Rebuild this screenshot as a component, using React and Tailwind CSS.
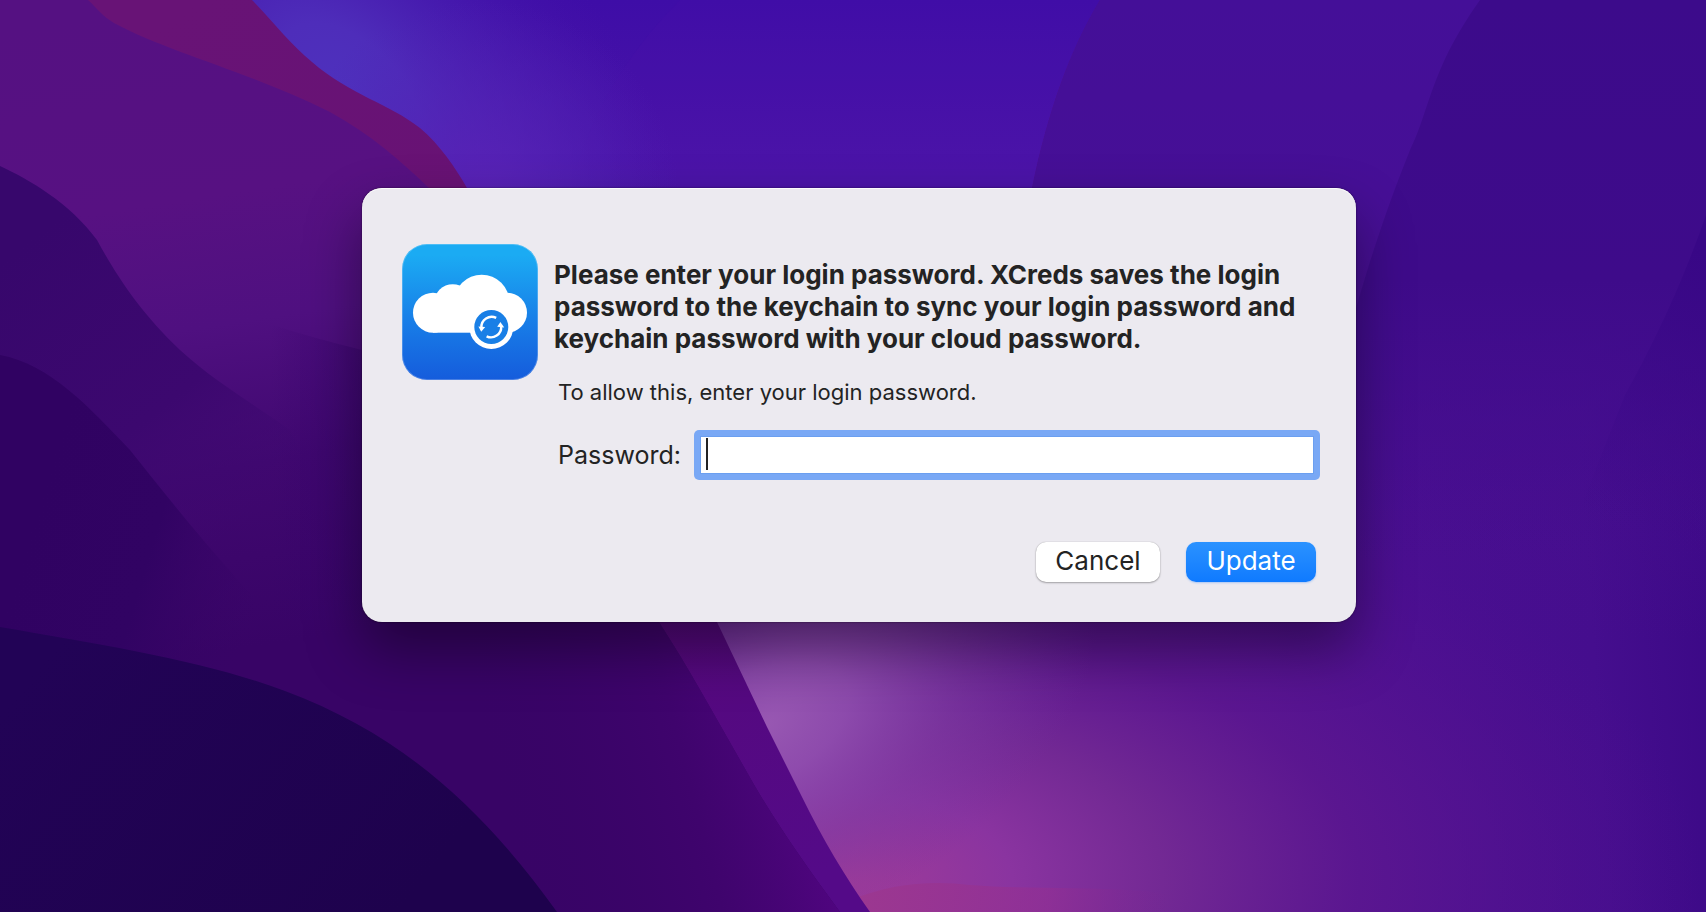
import React from "react";

function Wallpaper() {
  return (
    <svg
      aria-hidden="true"
      className="absolute inset-0 h-full w-full"
      viewBox="0 0 1706 912"
      preserveAspectRatio="none"
    >
      <defs>
        <linearGradient id="sky" gradientUnits="userSpaceOnUse" x1="800" y1="0" x2="800" y2="912">
          <stop offset="0" stopColor="#3e0da7" />
          <stop offset="0.2" stopColor="#4b15a8" />
          <stop offset="0.6" stopColor="#561590" />
          <stop offset="1" stopColor="#5a1490" />
        </linearGradient>
        <radialGradient id="blueGlow" gradientUnits="userSpaceOnUse" cx="0" cy="0" r="1" gradientTransform="translate(350 90) rotate(43) scale(420 240)">
          <stop offset="0" stopColor="#4e31bd" />
          <stop offset="0.2" stopColor="#4e2dba" />
          <stop offset="1" stopColor="#4713a8" stopOpacity="0" />
        </radialGradient>
        <radialGradient id="violetGlow" gradientUnits="userSpaceOnUse" cx="480" cy="200" r="200">
          <stop offset="0" stopColor="#5a22b6" />
          <stop offset="1" stopColor="#5020b4" stopOpacity="0" />
        </radialGradient>
        <linearGradient id="rightBand" gradientUnits="userSpaceOnUse" x1="1100" y1="560" x2="1706" y2="520">
          <stop offset="0" stopColor="#520f90" />
          <stop offset="0.5" stopColor="#4a0f91" />
          <stop offset="0.8" stopColor="#450e8e" />
          <stop offset="1" stopColor="#3c0987" />
        </linearGradient>
        <linearGradient id="rightTop" gradientUnits="userSpaceOnUse" x1="1200" y1="0" x2="1200" y2="640">
          <stop offset="0" stopColor="#440f98" />
          <stop offset="0.3" stopColor="#460f96" />
          <stop offset="1" stopColor="#4a0f90" stopOpacity="0" />
        </linearGradient>
        <linearGradient id="farRight" gradientUnits="userSpaceOnUse" x1="1500" y1="0" x2="1500" y2="560">
          <stop offset="0" stopColor="#3c0b8b" />
          <stop offset="0.5" stopColor="#3e0b8a" />
          <stop offset="1" stopColor="#430d8c" stopOpacity="0" />
        </linearGradient>
        <linearGradient id="edgeRight" gradientUnits="userSpaceOnUse" x1="1706" y1="250" x2="1600" y2="520">
          <stop offset="0" stopColor="#380786" />
          <stop offset="1" stopColor="#3d0a88" stopOpacity="0" />
        </linearGradient>
        <radialGradient id="pink" gradientUnits="userSpaceOnUse" cx="0" cy="0" r="1" gradientTransform="translate(840 880) scale(860 440)">
          <stop offset="0" stopColor="#a03c98" />
          <stop offset="0.2" stopColor="#8a34a0" />
          <stop offset="0.38" stopColor="#742a94" stopOpacity="0.95" />
          <stop offset="0.6" stopColor="#5e1890" stopOpacity="0.8" />
          <stop offset="1" stopColor="#520f90" stopOpacity="0" />
        </radialGradient>
        <radialGradient id="lilac" gradientUnits="userSpaceOnUse" cx="0" cy="0" r="1" gradientTransform="translate(765 725) rotate(62) scale(210 360)">
          <stop offset="0" stopColor="#9858b2" />
          <stop offset="0.25" stopColor="#9150b0" stopOpacity="0.85" />
          <stop offset="0.6" stopColor="#7e3ca4" stopOpacity="0.5" />
          <stop offset="1" stopColor="#7030a0" stopOpacity="0" />
        </radialGradient>
        <linearGradient id="magenta" gradientUnits="userSpaceOnUse" x1="850" y1="0" x2="1250" y2="0">
          <stop offset="0" stopColor="#9c3890" />
          <stop offset="0.5" stopColor="#932f92" stopOpacity="0.6" />
          <stop offset="0.8" stopColor="#7c2490" stopOpacity="0" />
        </linearGradient>
        <linearGradient id="wine" gradientUnits="userSpaceOnUse" x1="200" y1="0" x2="760" y2="912">
          <stop offset="0" stopColor="#681376" />
          <stop offset="0.3" stopColor="#681274" />
          <stop offset="0.65" stopColor="#55087a" />
          <stop offset="1" stopColor="#540a88" />
        </linearGradient>
        <linearGradient id="plum" gradientUnits="userSpaceOnUse" x1="200" y1="0" x2="300" y2="640">
          <stop offset="0" stopColor="#551182" />
          <stop offset="0.3" stopColor="#571182" />
          <stop offset="0.5" stopColor="#4f1080" />
          <stop offset="0.72" stopColor="#400870" />
          <stop offset="1" stopColor="#380466" />
        </linearGradient>
        <linearGradient id="plumLow" gradientUnits="userSpaceOnUse" x1="480" y1="740" x2="790" y2="660">
          <stop offset="0" stopColor="#380468" stopOpacity="0" />
          <stop offset="0.6" stopColor="#420470" stopOpacity="0.7" />
          <stop offset="1" stopColor="#520582" />
        </linearGradient>
        <linearGradient id="indigo" gradientUnits="userSpaceOnUse" x1="80" y1="200" x2="300" y2="480">
          <stop offset="0" stopColor="#37076c" />
          <stop offset="0.6" stopColor="#3c086f" />
          <stop offset="1" stopColor="#3e0870" stopOpacity="0" />
        </linearGradient>
        <linearGradient id="deep" gradientUnits="userSpaceOnUse" x1="40" y1="500" x2="270" y2="570">
          <stop offset="0" stopColor="#300262" />
          <stop offset="0.5" stopColor="#310363" />
          <stop offset="1" stopColor="#370466" stopOpacity="0" />
        </linearGradient>
        <linearGradient id="night" gradientUnits="userSpaceOnUse" x1="60" y1="640" x2="400" y2="912">
          <stop offset="0" stopColor="#220356" />
          <stop offset="1" stopColor="#1e024d" />
        </linearGradient>
        <linearGradient id="fold" gradientUnits="userSpaceOnUse" x1="270" y1="0" x2="362" y2="0">
          <stop offset="0" stopColor="#36046a" stopOpacity="0" />
          <stop offset="1" stopColor="#36046a" stopOpacity="0.5" />
        </linearGradient>
      </defs>
      <rect width="1706" height="912" fill="url(#sky)" />
      <path d="M1100 0C1070 50 1048 110 1032 188L1020 420V912H1706V0Z" fill="url(#rightBand)" />
      <path d="M1100 0C1070 50 1048 110 1032 188L1020 640H1706V0Z" fill="url(#rightTop)" />
      <path d="M1480 0C1430 70 1430 110 1410 150C1392 195 1380 230 1368 268L1280 560H1706V0Z" fill="url(#farRight)" />
      <path d="M1706 215C1680 290 1650 350 1625 395L1560 560H1706Z" fill="url(#edgeRight)" />
      <path d="M680 0C620 60 590 120 570 188H1032C1048 110 1070 50 1100 0Z" fill="#5014ac" opacity="0.12" />
      <rect width="860" height="500" fill="url(#blueGlow)" />
      <rect width="700" height="400" fill="url(#violetGlow)" />
      <rect x="600" y="420" width="1106" height="492" fill="url(#pink)" />
      <rect x="600" y="400" width="600" height="512" fill="url(#lilac)" />
      <path d="M850 900C890 884 930 880 970 885C1060 892 1160 880 1250 912H850Z" fill="url(#magenta)" />
      <path
        d="M0 0H252C275 24 291 45 312 62C350 95 390 104 420 128C440 145 455 167 467 188L560 330L717 622L767 727L802 797C822 838 846 878 870 912H0Z"
        fill="url(#wine)"
      />
      <path
        d="M0 0H88C98 9 102 16 114 23C170 53 250 72 330 112C370 134 400 160 429 188L540 400L659 622C690 670 716 718 744 767C772 818 806 866 840 912H0Z"
        fill="url(#plum)"
      />
      <path
        d="M450 560L626 560L659 622C690 670 716 718 744 767C772 818 806 866 840 912H450Z"
        fill="url(#plumLow)"
      />
      <path d="M270 324C300 334 330 342 362 350V620H270Z" fill="url(#fold)" />
      <path
        d="M0 166C30 180 70 203 97 240C116 275 140 312 180 350C215 382 255 405 290 430L400 640H0Z"
        fill="url(#indigo)"
      />
      <path
        d="M0 355C50 364 90 408 130 450C170 500 205 545 260 604L360 730H0Z"
        fill="url(#deep)"
      />
      <path
        d="M0 627C110 646 205 661 285 691C400 734 480 805 557 912H0Z"
        fill="url(#night)"
      />
    </svg>
  );
}

function CloudSyncIcon() {
  return (
    <svg aria-hidden="true" className="size-[136px] shrink-0" viewBox="0 0 136 136">
      <defs>
        <linearGradient id="tile" x1="0" y1="0" x2="0" y2="1">
          <stop offset="0.08" stopColor="#1babf3" />
          <stop offset="0.55" stopColor="#187fe8" />
          <stop offset="1" stopColor="#155cdc" />
        </linearGradient>
      </defs>
      <rect width="136" height="136" rx="25" fill="url(#tile)" />
      <rect x="0.5" y="0.5" width="135" height="135" rx="24.5" fill="none" stroke="#ffffff" strokeOpacity="0.22" />
      <g fill="#ffffff">
        <circle cx="31" cy="68.7" r="20" />
        <circle cx="50.7" cy="58.6" r="18.4" />
        <circle cx="79.7" cy="58.4" r="27.7" />
        <circle cx="105" cy="68.7" r="20" />
        <rect x="31" y="55" width="74" height="33.7" />
        <circle cx="89.3" cy="83" r="22" />
      </g>
      <circle cx="89.3" cy="83" r="17" fill="#197fe6" />
      <g fill="none" stroke="#ffffff" strokeWidth="2.4">
        <path d="M94.2 73.9A10.2 10.2 0 0 0 79.4 83.5" />
        <path d="M84.6 92.3A10.2 10.2 0 0 0 99.2 82.5" />
      </g>
      <path d="M76.4 82.4L83.2 83L79.2 87.8Z" fill="#ffffff" />
      <path d="M102.2 83.4L95.2 82.8L98.4 78Z" fill="#ffffff" />
    </svg>
  );
}

export default function App() {
  return (
    <main className="relative flex min-h-screen items-start justify-center overflow-hidden bg-[#4a1190] pt-[188px] pl-3 font-['Inter','Liberation_Sans',sans-serif] text-[#232323]">
      <Wallpaper />
      <form
        role="dialog"
        aria-labelledby="prompt-title"
        aria-describedby="prompt-detail"
        onSubmit={(event) => event.preventDefault()}
        className="relative w-full max-w-[994px] rounded-[20px] bg-[#eceaf0] pt-14 pr-9 pb-10 pl-10 shadow-[0_0_2px_rgba(0,0,0,0.6),0_28px_56px_rgba(0,0,0,0.4),inset_0_1px_0_rgba(255,255,255,0.8)]"
      >
        <div className="flex items-start gap-4">
          <CloudSyncIcon />
          <div className="min-w-0 flex-1 pt-[15px]">
            <h1 id="prompt-title" className="text-[26px] leading-8 font-bold">
              Please enter your login password. XCreds saves the login password to the keychain to sync your login
              password and keychain password with your cloud password.
            </h1>
            <p id="prompt-detail" className="mt-[21px] pl-1 text-[22px] leading-8">
              To allow this, enter your login password.
            </p>
            <div className="mt-[22px] flex items-center gap-[13px] pl-1">
              <label htmlFor="password" className="text-[25px] leading-8">
                Password:
              </label>
              <div className="relative flex-1 rounded-[5px] bg-[#79a8f5] p-1.5">
                <input
                  id="password"
                  type="password"
                  className="block h-[38px] w-full border border-[#6b9ff0] bg-white px-2 text-[25px] caret-transparent outline-none"
                />
                <span aria-hidden="true" className="absolute top-2 left-3 h-8 w-0.5 bg-[#232323]" />
              </div>
            </div>
          </div>
        </div>
        <div className="mt-[62px] flex justify-end gap-[26px] pr-1">
          <button
            type="button"
            className="h-10 w-[124px] rounded-[10px] bg-white pb-0.5 text-[26px] leading-8 shadow-[0_0_1px_rgba(0,0,0,0.3),0_1px_2px_rgba(0,0,0,0.3)]"
          >
            Cancel
          </button>
          <button
            type="submit"
            className="h-10 w-[130px] rounded-[10px] bg-linear-to-b from-[#2a92ff] to-[#0f7aff] pb-0.5 text-[26px] leading-8 text-white shadow-[0_1px_2px_rgba(20,120,255,0.3)]"
          >
            Update
          </button>
        </div>
      </form>
    </main>
  );
}
